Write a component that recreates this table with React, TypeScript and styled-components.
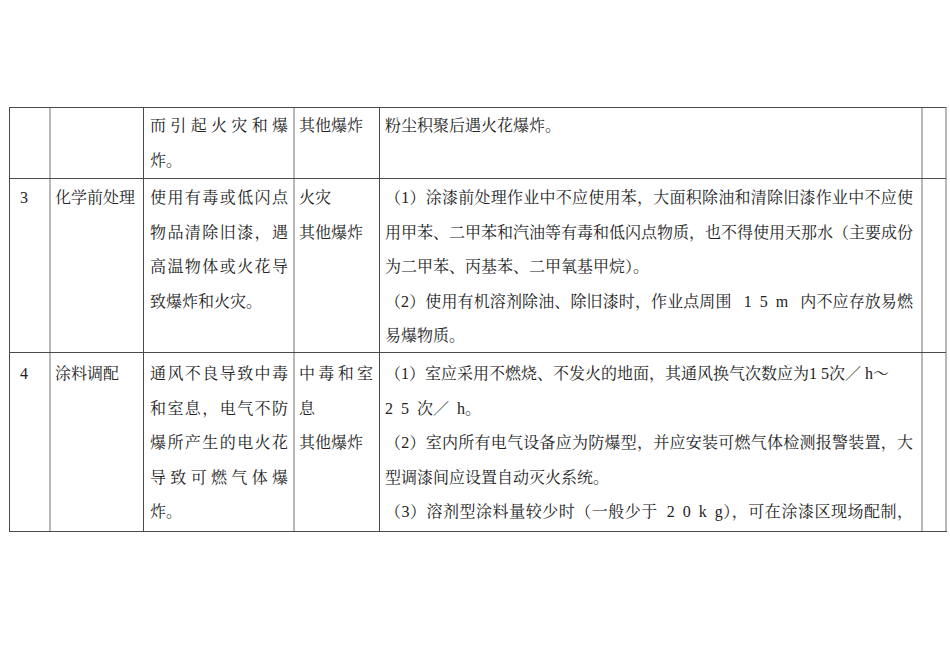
import React from 'react';
import styled, { createGlobalStyle } from 'styled-components';

const GlobalStyle = createGlobalStyle`
  html, body {
    margin: 0;
    padding: 0;
    background: #fff;
  }
  body {
    font-family: "Liberation Serif", "Noto Serif CJK SC", "Noto Sans CJK SC", serif;
    color: #222;
  }
`;

type Line = { text: string; justify?: boolean };
type CellData = Line[];
type RowData = { height: number; padTop: number; cells: CellData[] };

const j = (text: string): Line => ({ text, justify: true });
const l = (text: string): Line => ({ text });

// en space, used where the source spreads digits and units apart
const E = '\u2002';

const columns = [
  { soft: false, pl: 10, pr: 4 },
  { soft: true, pl: 4, pr: 4 },
  { soft: false, pl: 6, pr: 5 },
  { soft: true, pl: 4, pr: 6 },
  { soft: false, pl: 5, pr: 8 },
  { soft: true, pl: 0, pr: 0 },
];

const rows: RowData[] = [
  {
    height: 71,
    padTop: 1,
    cells: [
      [],
      [],
      [j('而引起火灾和爆'), l('炸。')],
      [l('其他爆炸')],
      [l('粉尘积聚后遇火花爆炸。')],
      [],
    ],
  },
  {
    height: 174,
    padTop: 2,
    cells: [
      [l('3')],
      [l('化学前处理')],
      [j('使用有毒或低闪点'), j('物品清除旧漆，遇'), j('高温物体或火花导'), l('致爆炸和火灾。')],
      [l('火灾'), l('其他爆炸')],
      [
        j('（1）涂漆前处理作业中不应使用苯，大面积除油和清除旧漆作业中不应使'),
        j('用甲苯、二甲苯和汽油等有毒和低闪点物质，也不得使用天那水（主要成份'),
        l('为二甲苯、丙基苯、二甲氧基甲烷）。'),
        j(`（2）使用有机溶剂除油、除旧漆时，作业点周围\u00a0${E}1${E}5${E}m${E}\u00a0内不应存放易燃`),
        l('易爆物质。'),
      ],
      [],
    ],
  },
  {
    height: 179,
    padTop: 4,
    cells: [
      [l('4')],
      [l('涂料调配')],
      [j('通风不良导致中毒'), j('和室息，电气不防'), j('爆所产生的电火花'), j('导致可燃气体爆'), l('炸。')],
      [j('中毒和室'), l('息'), l('其他爆炸')],
      [
        l('（1）室应采用不燃烧、不发火的地面，其通风换气次数应为1 5次／ h～'),
        l(`2${E}5${E}次／${E}h。`),
        j('（2）室内所有电气设备应为防爆型，并应安装可燃气体检测报警装置，大'),
        l('型调漆间应设置自动灭火系统。'),
        j(`（3）溶剂型涂料量较少时（一般少于\u00a0 2${E}0${E}k${E}g），可在涂漆区现场配制，`),
      ],
      [],
    ],
  },
];

const Page = styled.div`
  width: 950px;
  height: 672px;
  padding: 107px 0 0 9px;
  box-sizing: border-box;
  overflow: hidden;
`;

const Table = styled.div`
  display: flex;
  flex-direction: column;
  width: 938px;
  border-bottom: 1px solid #4a4a4a;
`;

const Row = styled.div<{ $h: number; $padTop: number }>`
  display: grid;
  grid-template-columns: 40px 94px 150px 86px 542px 24px;
  height: ${(p) => p.$h}px;
  box-sizing: border-box;
  border-top: 1px solid #4a4a4a;
  border-right: 2px solid #b8b8b8;
  --pad-top: ${(p) => p.$padTop}px;
`;

const Cell = styled.div<{ $soft: boolean; $pl: number; $pr: number }>`
  box-sizing: border-box;
  min-width: 0;
  overflow: hidden;
  border-left: ${(p) => (p.$soft ? '2px solid #b8b8b8' : '1px solid #4a4a4a')};
  padding: var(--pad-top) ${(p) => p.$pr}px 0 ${(p) => p.$pl}px;
`;

const TextLine = styled.div<{ $justify?: boolean }>`
  font-size: 16px;
  line-height: 34.5px;
  height: 34.5px;
  white-space: nowrap;
  text-align: ${(p) => (p.$justify ? 'justify' : 'left')};
  text-align-last: ${(p) => (p.$justify ? 'justify' : 'left')};
`;

export default function App() {
  return (
    <>
      <GlobalStyle />
      <Page>
        <Table>
          {rows.map((row, ri) => (
            <Row key={ri} $h={row.height} $padTop={row.padTop}>
              {row.cells.map((cell, ci) => (
                <Cell key={ci} $soft={columns[ci].soft} $pl={columns[ci].pl} $pr={columns[ci].pr}>
                  {cell.map((line, li) => (
                    <TextLine key={li} $justify={line.justify}>
                      {line.text}
                    </TextLine>
                  ))}
                </Cell>
              ))}
            </Row>
          ))}
        </Table>
      </Page>
    </>
  );
}
